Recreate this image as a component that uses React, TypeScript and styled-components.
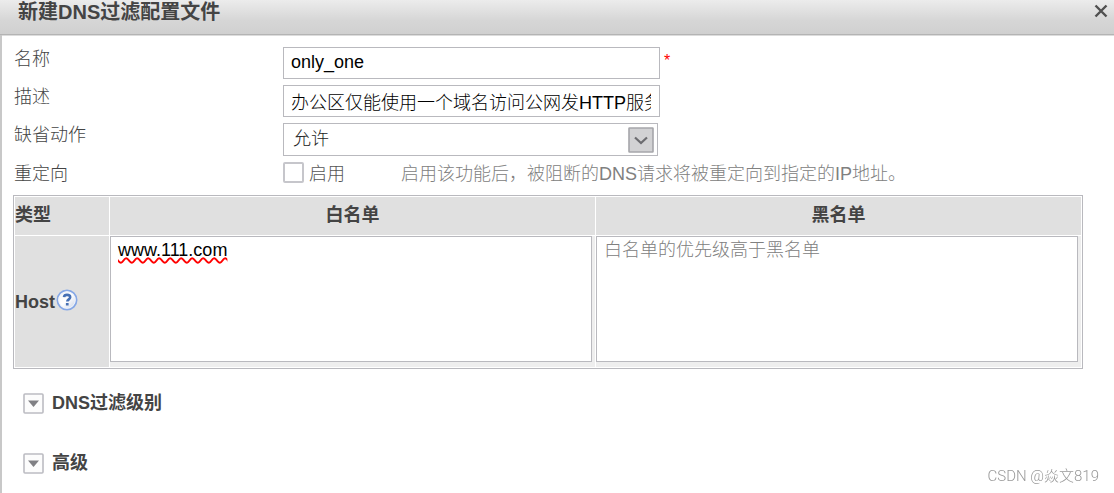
import React, { useState } from 'react';
import styled, { createGlobalStyle } from 'styled-components';

const GlobalStyle = createGlobalStyle`
  *, *::before, *::after { box-sizing: border-box; }
  body {
    margin: 0;
    background: #fff;
    color: #444;
    font: 300 18px/24px "Liberation Sans", "Noto Sans CJK SC", sans-serif;
  }
  button, input, select, textarea { font: inherit; }
`;

const Dialog = styled.section`
  display: flex;
  flex-direction: column;
  min-height: 100vh;
`;

const TitleBar = styled.header`
  display: flex;
  align-items: flex-start;
  justify-content: space-between;
  height: 35px;
  padding: 0 6px 0 18px;
  background: linear-gradient(#ececec, #d6d6d6 60%, #d0d0d0);
  border-bottom: 1px solid #b4b4b4;
  box-shadow: 0 1px 0 #dcdcdc;
`;

const Title = styled.h1`
  margin: 0;
  font-size: 20px;
  line-height: 24px;
  font-weight: 700;
`;

const CloseButton = styled.button`
  display: flex;
  margin: 4px 0 0;
  padding: 0;
  border: 0;
  background: none;
  color: #505050;
`;

const Content = styled.div`
  flex: 1;
  padding: 12px 31px 0 11px;
  border-left: 2px solid #c8c8c8;
`;

const Row = styled.div`
  display: flex;
  min-height: 38px;
`;

const CheckRow = styled.div`
  display: flex;
  padding: 1px 0 9px;
`;

const RowLabel = styled.label`
  flex: 0 0 270px;
  padding-left: 1px;
`;

const RowCaption = styled.span`
  flex: 0 0 270px;
  padding-left: 1px;
`;

const TextInput = styled.input`
  width: 377px;
  height: 32px;
  padding: 0 8px 1px 7px;
  border: 1px solid #b9b9be;
  color: #000;
  outline: none;
`;

const Required = styled.span`
  margin-left: 4px;
  padding-top: 2px;
  color: #f00;
  font-size: 16px;
`;

const SelectWrap = styled.div`
  position: relative;
  width: 375px;
  height: 33px;
`;

const Select = styled.select`
  appearance: none;
  width: 100%;
  height: 100%;
  padding: 0 32px 2px 9px;
  border: 1px solid #b9b9be;
  border-radius: 0;
  background: #fff;
  color: #222;
  outline: none;
`;

const SelectArrow = styled.svg`
  position: absolute;
  top: 4px;
  right: 4px;
  pointer-events: none;
`;

const CheckLabel = styled.label`
  display: flex;
  gap: 5px;
  width: 118px;
  color: #555;
`;

const Checkbox = styled.input`
  appearance: none;
  width: 21px;
  height: 21px;
  margin: 0;
  border: 2px solid #c6c6cb;
  border-radius: 2px;
  background: #fff;

  &:checked { background: #8c8c90; }
`;

const Hint = styled.span`
  color: #808080;
`;

const ListTable = styled.table`
  width: 100%;
  table-layout: fixed;
  border: 1px solid #b9b9be;
  border-spacing: 1px;
`;

const HeadCell = styled.th<{ $first?: boolean }>`
  width: ${(p) => (p.$first ? '94px' : 'auto')};
  height: 38px;
  padding: 0 0 2px;
  background: #e0e0e0;
  text-align: ${(p) => (p.$first ? 'left' : 'center')};
  font-weight: 700;
`;

const HostCell = styled.th`
  padding: 0;
  background: #e0e0e0;
  text-align: left;
  font-weight: 700;
`;

const HostLabel = styled.div`
  display: flex;
  align-items: center;
`;

const HelpButton = styled.button`
  display: flex;
  padding: 0 0 4px 1px;
  border: 0;
  background: none;
`;

const ListCell = styled.td`
  padding: 0 3px 5px 0;
  background: #eee;
`;

const ListArea = styled.textarea<{ $misspelt?: boolean }>`
  display: block;
  width: 100%;
  height: 126px;
  padding: 1px 8px 1px 7px;
  border: 1px solid #b9b9be;
  background: #fff;
  color: #000;
  outline: none;
  resize: none;
  text-decoration: ${(p) => (p.$misspelt ? 'underline wavy #f00 2px' : 'none')};
  text-decoration-skip-ink: none;
  text-underline-offset: 1px;

  &::placeholder { color: #808080; opacity: 1; }
`;

const Sections = styled.div`
  display: flex;
  flex-direction: column;
  gap: 36px;
  padding: 22px 10px 0;
`;

const SectionToggle = styled.button`
  display: flex;
  align-items: center;
  gap: 8px;
  height: 24px;
  padding: 0;
  border: 0;
  background: none;
  color: #444;
  font-weight: 700;
`;

const Watermark = styled.span`
  position: fixed;
  right: 15px;
  bottom: 5px;
  color: #999;
  font: 300 15px/24px Roboto, "Noto Sans CJK SC", sans-serif;
`;

function HelpIcon() {
  return (
    <svg width="22" height="22" viewBox="0 0 22 22" aria-hidden="true">
      <defs>
        <linearGradient id="help" x1="0" y1="0" x2="1" y2="1">
          <stop offset="0" stopColor="#f4f4f6" />
          <stop offset="0.5" stopColor="#fff" />
          <stop offset="1" stopColor="#c4cde0" />
        </linearGradient>
      </defs>
      <circle cx="11" cy="11" r="9.6" fill="url(#help)" stroke="#86a8e6" strokeWidth="1.8" />
      <circle cx="11" cy="11" r="8.2" fill="none" stroke="#eef3fc" strokeWidth="1" />
      <path d="M8 8.200C8.200 6.600 9.300 5.900 11 5.900c1.900 0 3.200.9 3.200 2.400 0 2-2.900 2.100-2.900 4.200" fill="none" stroke="#4670b4" strokeWidth="2.600" />
      <rect x="9.900" y="14" width="2.700" height="2.500" fill="#4670b4" />
    </svg>
  );
}

function ToggleIcon() {
  return (
    <svg width="21" height="21" viewBox="0 0 21 21" aria-hidden="true">
      <rect x="1" y="1" width="19" height="19" rx="1" fill="#fcfcfc" stroke="#bcbcc2" strokeWidth="1.600" />
      <path d="M5 7.500h11l-5.500 6.500z" fill="#808084" />
    </svg>
  );
}

export default function App() {
  const [name, setName] = useState('only_one');
  const [description, setDescription] = useState('办公区仅能使用一个域名访问公网发HTTP服务');
  const [whitelist, setWhitelist] = useState('www.111.com');

  return (
    <Dialog aria-labelledby="dialog-title">
      <GlobalStyle />
      <TitleBar>
        <Title id="dialog-title">新建DNS过滤配置文件</Title>
        <CloseButton type="button" aria-label="关闭">
          <svg width="14" height="14" viewBox="0 0 14 14" aria-hidden="true">
            <path d="M1.500 1.500l11 11M12.500 1.500l-11 11" stroke="currentColor" strokeWidth="2.400" />
          </svg>
        </CloseButton>
      </TitleBar>
      <Content>
        <Row>
          <RowLabel htmlFor="name">名称</RowLabel>
          <TextInput id="name" value={name} onChange={(e) => setName(e.target.value)} />
          <Required>*</Required>
        </Row>
        <Row>
          <RowLabel htmlFor="description">描述</RowLabel>
          <TextInput id="description" value={description} onChange={(e) => setDescription(e.target.value)} />
        </Row>
        <Row>
          <RowLabel htmlFor="action">缺省动作</RowLabel>
          <SelectWrap>
            <Select id="action">
              <option>允许</option>
              <option>阻断</option>
            </Select>
            <SelectArrow width="26" height="26" viewBox="0 0 26 26" aria-hidden="true">
              <rect x="1" y="1" width="24" height="24" rx="0.500" fill="#d2d2d4" stroke="#a6a6aa" strokeWidth="1.600" />
              <path d="M7 10.500l6 5.500 6-5.500" fill="none" stroke="#6c6c70" strokeWidth="2.200" />
            </SelectArrow>
          </SelectWrap>
        </Row>
        <CheckRow>
          <RowCaption>重定向</RowCaption>
          <CheckLabel>
            <Checkbox type="checkbox" />
            启用
          </CheckLabel>
          <Hint>启用该功能后，被阻断的DNS请求将被重定向到指定的IP地址。</Hint>
        </CheckRow>
        <ListTable>
          <thead>
            <tr>
              <HeadCell $first scope="col">类型</HeadCell>
              <HeadCell scope="col">白名单</HeadCell>
              <HeadCell scope="col">黑名单</HeadCell>
            </tr>
          </thead>
          <tbody>
            <tr>
              <HostCell scope="row">
                <HostLabel>
                  Host
                  <HelpButton type="button" aria-label="帮助">
                    <HelpIcon />
                  </HelpButton>
                </HostLabel>
              </HostCell>
              <ListCell>
                <ListArea
                  $misspelt
                  aria-label="白名单"
                  spellCheck={false}
                  value={whitelist}
                  onChange={(e) => setWhitelist(e.target.value)}
                />
              </ListCell>
              <ListCell>
                <ListArea aria-label="黑名单" placeholder="白名单的优先级高于黑名单" />
              </ListCell>
            </tr>
          </tbody>
        </ListTable>
        <Sections>
          <SectionToggle type="button" aria-expanded="false">
            <ToggleIcon />
            DNS过滤级别
          </SectionToggle>
          <SectionToggle type="button" aria-expanded="false">
            <ToggleIcon />
            高级
          </SectionToggle>
        </Sections>
      </Content>
      <Watermark>CSDN @焱文819</Watermark>
    </Dialog>
  );
}
